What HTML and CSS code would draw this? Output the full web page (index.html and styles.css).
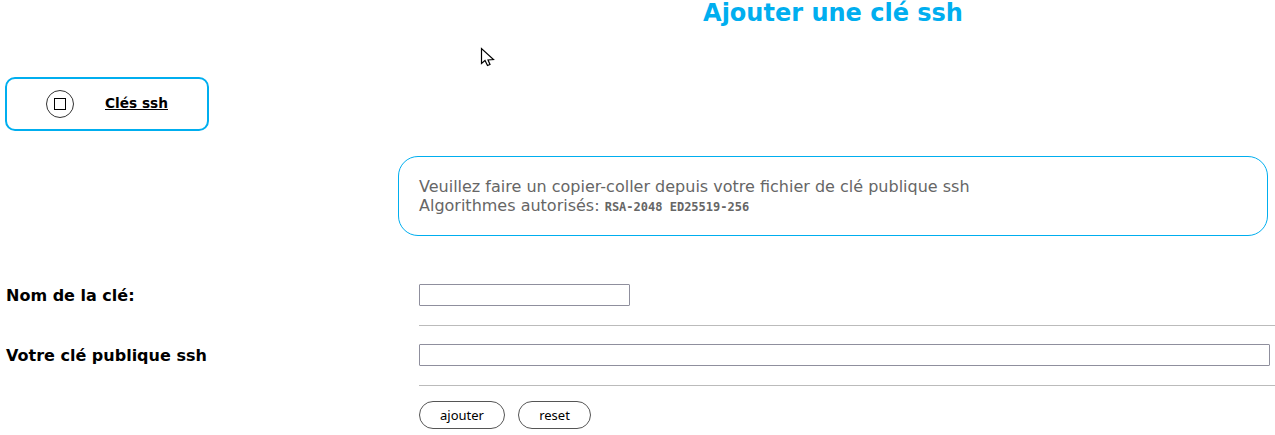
FILE: index.html
```html
<!DOCTYPE html>
<html lang="fr">

<head>
    <meta charset="UTF-8">
    <title>Ajouter une clé ssh</title>
    <link rel="stylesheet" href="styles.css">
</head>

<body>
    <svg class="cursor" width="16" height="22" viewBox="0 0 16 22">
        <path d="M1.5 1.5 V16.5 L5 13.5 L7.5 18.5 L10 17.5 L8 13 L13.5 12.5 Z" fill="#fff" stroke="#000" stroke-width="1.2"/>
    </svg>

    <div class="top">
        <nav class="side">
            <a class="side-link" href="#">
                <span class="side-icon"><span class="side-square"></span></span>
                <span class="side-label">Clés ssh</span>
            </a>
        </nav>
        <div class="main">
            <h1 class="title">Ajouter une clé ssh</h1>
            <div class="notice">
                Veuillez faire un copier-coller depuis votre fichier de clé publique ssh<br>
                Algorithmes autorisés: <code class="algos">RSA-2048 ED25519-256</code>
            </div>
        </div>
    </div>

    <form class="key-form">
        <div class="row row-name">
            <label class="row-label" for="keyName">Nom de la clé:</label>
            <div class="row-field"><input type="text" id="keyName" class="input-name"></div>
        </div>
        <div class="row row-key">
            <label class="row-label" for="keyValue">Votre clé publique ssh</label>
            <div class="row-field"><input type="text" id="keyValue" class="input-key"></div>
        </div>
        <div class="actions">
            <button type="submit" class="btn btn-add">ajouter</button>
            <button type="reset" class="btn btn-reset">reset</button>
        </div>
    </form>
</body>

</html>
```

FILE: styles.css
```css
html, body {
    height: 435px;
    overflow: hidden;
}

body {
    margin: 0;
    background: #fff;
    color: #000;
    font-family: 'DejaVu Sans', sans-serif;
    position: relative;
}

/* mouse pointer caught in the screenshot */
.cursor {
    position: absolute;
    left: 480px;
    top: 47px;
}

.top {
    display: flex;
    height: 236px;
}

.side {
    width: 398px;
    flex: none;
    padding: 77px 0 0 5px;
    box-sizing: border-box;
}

.side-link {
    display: flex;
    align-items: center;
    width: 204px;
    height: 54px;
    box-sizing: border-box;
    border: 2px solid #00aeef;
    border-radius: 10px;
    padding-left: 39px;
    color: #000;
    font-size: 13.7px;
    font-weight: bold;
}

.side-icon {
    display: flex;
    align-items: center;
    justify-content: center;
    width: 28px;
    height: 28px;
    box-sizing: border-box;
    border: 1px solid #333;
    border-radius: 50%;
}

.side-square {
    width: 12px;
    height: 12px;
    border: 1px solid #000;
    box-sizing: border-box;
}

.side-label {
    margin-left: 31px;
    position: relative;
    top: -1px;
}

.main {
    width: 870px;
}

.title {
    margin: 0;
    height: 155px;
    padding-top: 1px;
    color: #00aeef;
    font-size: 24px;
    line-height: 25px;
    font-weight: bold;
    text-align: center;
}

.notice {
    height: 80px;
    box-sizing: border-box;
    border: 1px solid #00aeef;
    border-radius: 20px;
    padding: 20px;
    color: #666;
    font-size: 16px;
    line-height: 19px;
}

.algos {
    font-family: 'DejaVu Sans Mono', monospace;
    font-size: 12px;
    font-weight: bold;
}

.key-form {
    padding-top: 38px;
}

.row {
    display: flex;
    height: 60px;
    align-items: flex-start;
}

.row-label {
    width: 419px;
    flex: none;
    box-sizing: border-box;
    padding: 12px 0 0 6px;
    font-size: 16px;
    line-height: 20px;
    font-weight: bold;
}

.row-field {
    flex: 1;
    height: 41px;
    padding-top: 10px;
    border-bottom: 1px solid #bbb;
}

input {
    display: block;
    height: 22px;
    box-sizing: border-box;
    border: 1px solid #8f8f9d;
    border-radius: 1px;
    padding: 1px 2px;
    background: #fff;
}

.input-name {
    width: 211px;
}

.input-key {
    width: 851px;
}

.actions {
    display: flex;
    gap: 13px;
    padding: 7px 0 0 419px;
}

.btn {
    height: 28px;
    box-sizing: border-box;
    border: 1px solid #555;
    border-radius: 14px;
    background: #fff;
    color: #000;
    font-family: 'Noto Sans', sans-serif;
    font-size: 13px;
    padding: 0;
}

.btn-add {
    width: 86px;
}

.btn-reset {
    width: 73px;
}
```
